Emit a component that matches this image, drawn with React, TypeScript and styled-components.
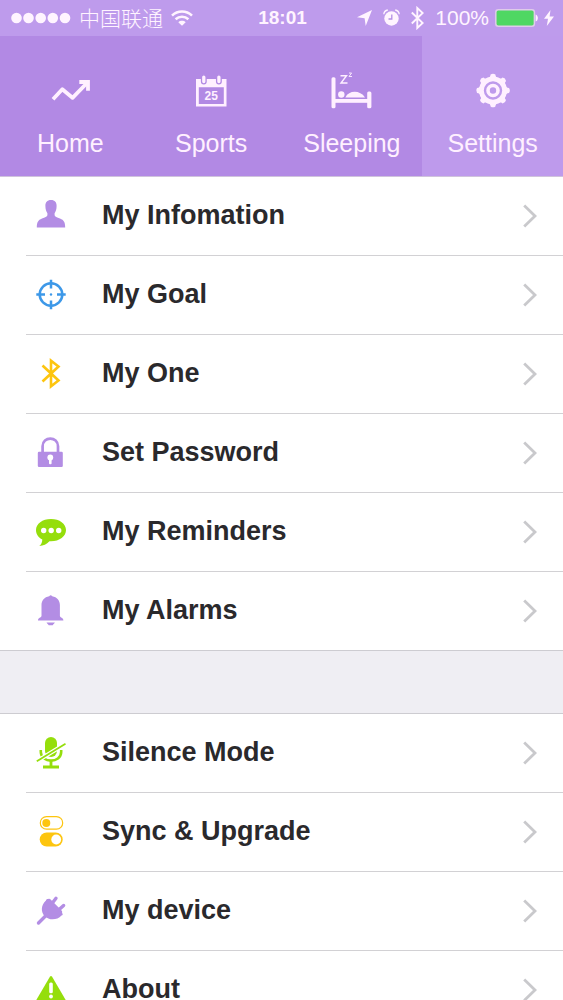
import React from "react";
import styled, { createGlobalStyle } from "styled-components";

const LILAC = "#b38de4";
const LIME = "#95de0c";
const AMBER = "#fdc50f";
const SKY = "#3d98e8";

const GlobalStyle = createGlobalStyle`
  * { box-sizing: border-box; }
  body {
    margin: 0;
    background: #ffffff;
    font-family: "Liberation Sans", Arial, "Noto Sans CJK SC", sans-serif;
  }
`;

const Screen = styled.div`
  display: flex;
  flex-direction: column;
  height: 100vh;
  overflow: hidden;
`;

const StatusBar = styled.header`
  display: grid;
  grid-template-columns: 1fr auto 1fr;
  align-items: center;
  flex: none;
  height: 36px;
  padding: 0 9px 0 11px;
  background: #be9bec;
  color: #fff4ff;
`;

const StatusGroup = styled.div<{ $end?: boolean; $gap: number }>`
  display: flex;
  align-items: center;
  justify-content: ${(p) => (p.$end ? "flex-end" : "flex-start")};
  gap: ${(p) => p.$gap}px;
  white-space: nowrap;
`;

const Carrier = styled.span`
  padding-bottom: 2px;
  font-family: "Noto Sans CJK SC", sans-serif;
  font-size: 21px;
  font-weight: 300;
  line-height: 30px;
`;

const Clock = styled.time`
  font-size: 19px;
  font-weight: 700;
  line-height: 30px;
`;

const Percent = styled.span`
  font-size: 21px;
  line-height: 30px;
`;

const TabBar = styled.nav`
  display: grid;
  grid-template-columns: repeat(4, 1fr);
  flex: none;
  height: 141px;
  border-bottom: 1px solid #cfc3dc;
  background: #b289e4;
`;

const Tab = styled.a<{ $active?: boolean }>`
  display: flex;
  flex-direction: column;
  align-items: center;
  gap: 17px;
  padding-top: 35px;
  background: ${(p) => (p.$active ? "#be9aec" : "transparent")};
  color: #fff0ff;
  font-size: 25px;
  line-height: 30px;
  text-decoration: none;
`;

const Content = styled.main`
  flex: 1;
  min-height: 0;
  overflow-y: auto;
  scrollbar-width: none;
  background: #efeef3;
`;

const Group = styled.ul`
  margin: 0;
  padding: 0 0 0 26px;
  list-style: none;
  background: #ffffff;

  & + & {
    margin-top: 62px;
    border-top: 1px solid #cdccd1;
  }

  &:first-child {
    border-bottom: 1px solid #cdccd1;
  }
`;

const Item = styled.li`
  & + & {
    border-top: 1px solid #d2d1d4;
  }
`;

const RowLink = styled.a`
  display: flex;
  align-items: center;
  height: 78px;
  padding: 0 26px 0 9px;
  color: #2a292c;
  text-decoration: none;
`;

const RowLabel = styled.span`
  flex: 1;
  margin-left: 35px;
  padding-bottom: 2px;
  font-size: 27px;
  font-weight: 700;
  line-height: 32px;
`;

const RowIcon = styled.svg.attrs({ viewBox: "0 0 32 32", "aria-hidden": true })`
  flex: none;
  width: 32px;
  height: 32px;
`;

const TabIcon = styled.svg.attrs({ viewBox: "0 0 40 40", "aria-hidden": true })`
  flex: none;
  width: 40px;
  height: 40px;
  overflow: visible;
`;

const Chevron = () => (
  <svg width="14" height="24" viewBox="0 0 14 24" aria-hidden="true">
    <path d="M1.200 1.500 12 12 1.200 22.500" fill="none" stroke="#c9c9cc" strokeWidth="2.800" />
  </svg>
);

const SignalDots = () => (
  <svg width="60" height="12" viewBox="0 0 60 12" fill="currentColor" aria-hidden="true">
    {[5.5, 17.5, 29.7, 41.8, 54].map((x) => (
      <circle key={x} cx={x} cy="6" r="5.300" />
    ))}
  </svg>
);

const Wifi = () => (
  <svg width="22" height="16" viewBox="0 0 22 16" fill="none" stroke="currentColor" strokeWidth="2.600" aria-hidden="true">
    <path d="M1 5.600C6.800.1 15.200.1 21 5.600" />
    <path d="M4.600 9.300C8.300 5.900 13.700 5.900 17.400 9.300" />
    <path d="M11 15.800 7.300 12.200C9.400 10.300 12.600 10.300 14.700 12.200Z" fill="currentColor" stroke="none" />
  </svg>
);

const LocationArrow = () => (
  <svg width="15" height="16" viewBox="0 0 15 16" fill="currentColor" aria-hidden="true">
    <path d="M15 0 8.700 16 7.600 8.200 0 7.200Z" />
  </svg>
);

const AlarmClock = () => (
  <svg width="17" height="18" viewBox="0 0 17 18" aria-hidden="true">
    <circle cx="8.500" cy="9.500" r="7.200" fill="currentColor" />
    <path d="M.8 5.200C1 3 2.600 1.400 4.800 1M16.200 5.200C16 3 14.400 1.400 12.200 1" fill="none" stroke="currentColor" strokeWidth="1.300" />
    <path d="M8.800 5.500V10H5.500" fill="none" stroke="#b48fe4" strokeWidth="1.300" />
  </svg>
);

const StatusBluetooth = () => (
  <svg width="13" height="24" viewBox="0 0 13 24" fill="none" stroke="currentColor" strokeWidth="1.900" aria-hidden="true">
    <path d="M.8 6.500 11.700 17 6.300 22V2L11.700 7 .8 17.500" />
  </svg>
);

const Battery = () => (
  <svg width="43" height="18" viewBox="0 0 43 18" aria-hidden="true">
    <rect x=".8" y=".8" width="38.600" height="16.400" rx="2.500" fill="#4fd763" stroke="#dfcbea" strokeWidth="1.500" />
    <path d="M40.600 5.500C43.600 6.500 43.600 11.500 40.600 12.500Z" fill="currentColor" />
  </svg>
);

const Bolt = () => (
  <svg width="10" height="16" viewBox="0 0 10 16" fill="currentColor" aria-hidden="true">
    <path d="M6.500 0 0 8.800H4L2.800 16 10 6.400H5.600Z" />
  </svg>
);

const TrendIcon = () => (
  <TabIcon fill="none" stroke="currentColor" strokeWidth="3.800">
    <path d="M3 28.300 12.300 18.300 22.500 26.800 37 12" strokeLinejoin="round" />
    <path d="M29.300 11H38V19.800" />
  </TabIcon>
);

const CalendarIcon = () => (
  <TabIcon>
    <path fillRule="evenodd" fill="currentColor" d="M5 8H35.500V35.500H5ZM7.800 16.300V33H32.800V16.300Z" />
    <rect x="10.500" y="3.800" width="4.600" height="9" rx="2.300" fill="currentColor" stroke="#b289e4" strokeWidth="1.300" />
    <rect x="25.600" y="3.800" width="4.600" height="9" rx="2.300" fill="currentColor" stroke="#b289e4" strokeWidth="1.300" />
    <text x="20.300" y="29" fill="currentColor" fontSize="12" fontWeight="700" textAnchor="middle">25</text>
  </TabIcon>
);

const BedIcon = () => (
  <TabIcon fill="currentColor">
    <rect x="-.5" y="6.300" width="4" height="31" rx="1.500" />
    <rect x="35.200" y="20.500" width="4.200" height="16.800" rx="1.500" />
    <rect x="2" y="28" width="35" height="3.800" />
    <circle cx="9.300" cy="23.500" r="3.200" />
    <path d="M13.300 26.400C17 19 28 19 33 26.400Z" />
    <path d="M8.500 4.700H14.500L9 12H15.500" fill="none" stroke="currentColor" strokeWidth="1.400" />
    <path d="M17 2H19.600L17 5.500H20" fill="none" stroke="currentColor" strokeWidth=".9" />
  </TabIcon>
);

const GearIcon = () => (
  <TabIcon fill="none" stroke="currentColor">
    <circle cx="20" cy="19.500" r="11.600" strokeWidth="4.800" />
    {[0, 45, 90, 135, 180, 225, 270, 315].map((angle) => (
      <path
        key={angle}
        d="M14.800 7.300C17 6.600 17.300 5.500 17.600 3.500Q20 1.800 22.400 3.500C22.700 5.500 23 6.600 25.200 7.300Z"
        fill="currentColor"
        stroke="none"
        transform={`rotate(${angle} 20 19.500)`}
      />
    ))}
    <circle cx="20" cy="19.500" r="5" strokeWidth="3.600" />
  </TabIcon>
);

const PersonIcon = () => (
  <RowIcon fill={LILAC}>
    <path d="M16 0C19.900 0 21.800 2.500 21.600 6.200C21.500 9.300 20.800 11.400 19.600 13.200V15.200C19.900 16.800 22 17.200 25 18.400C29 20 30.200 22.300 30.200 27.500H1.800C1.800 22.300 3 20 7 18.400C10 17.200 12.100 16.800 12.400 15.200V13.200C11.200 11.400 10.500 9.300 10.400 6.200C10.200 2.500 12.100 0 16 0Z" />
  </RowIcon>
);

const TargetIcon = () => (
  <RowIcon fill="none" stroke={SKY} strokeWidth="2.500">
    <circle cx="16" cy="15.500" r="11.300" />
    <path d="M16 .8V9.500M16 21.500V30.200M1.300 15.500H10M22 15.500H30.700" />
    <circle cx="16" cy="15.500" r="1.200" fill={SKY} stroke="none" />
  </RowIcon>
);

const BluetoothIcon = () => (
  <RowIcon fill="none" stroke={AMBER} strokeWidth="2.600">
    <path d="M7.500 7.500 23.500 22.500 16 28.300V2.700L23.500 8.500 7.500 23.500" />
  </RowIcon>
);

const LockIcon = () => (
  <RowIcon>
    <path d="M7.600 16V9.300C7.600-.9 23-.9 23 9.300V16" fill="none" stroke={LILAC} strokeWidth="2.700" />
    <rect x="2.800" y="14.800" width="25" height="15.200" rx="1.200" fill={LILAC} />
    <circle cx="15.300" cy="20.500" r="2.900" fill="#ffffff" />
    <rect x="14" y="21.500" width="2.600" height="5.800" rx="1" fill="#ffffff" />
  </RowIcon>
);

const BubbleIcon = () => (
  <RowIcon>
    <path d="M16 3C24.600 3 31 7.800 31 14S24.600 25.300 16 25.300H14.500C11.500 28.500 8.500 29.700 4.300 30C6.300 28.300 7.200 26.500 7.300 23.500C3.300 21.400 1 18 1 14C1 7.800 7.400 3 16 3Z" fill={LIME} />
    <g fill="#ffffff">
      <circle cx="8.700" cy="14.500" r="2.700" />
      <circle cx="16.200" cy="14.500" r="2.700" />
      <circle cx="23.700" cy="14.500" r="2.700" />
    </g>
  </RowIcon>
);

const BellIcon = () => (
  <RowIcon fill={LILAC}>
    <path d="M14.200 1.200Q15.700-.5 17.200 1.200C22 2 24.900 5.500 24.900 10V21C25.100 22.700 28.400 22.500 28.400 25.600H3C3 22.500 6.300 22.700 6.500 21V10C6.500 5.500 9.400 2 14.200 1.200Z" />
    <path d="M11.500 27.500H19.900C19.300 29 18.200 28.800 17.700 30.300H13.700C13.200 28.800 12.100 29 11.500 27.500Z" />
  </RowIcon>
);

const MutedMicIcon = () => (
  <RowIcon>
    <rect x="10" y="0" width="12" height="20" rx="6" fill={LIME} />
    <path d="M5.800 13V15C6 26.500 26 26.500 26.200 15V13" fill="none" stroke={LIME} strokeWidth="2.600" />
    <path d="M16 23V29M8 30H24" fill="none" stroke={LIME} strokeWidth="2.800" />
    <path d="M1.800 24.300 30.500 6.800" stroke="#ffffff" strokeWidth="4.200" />
    <path d="M1.800 24.300 30.500 6.800" stroke={LIME} strokeWidth="1.800" />
  </RowIcon>
);

const TogglesIcon = () => (
  <RowIcon>
    <rect x="5.300" y=".6" width="22.400" height="12.600" rx="6.300" fill="#ffffff" stroke={AMBER} strokeWidth="1.200" />
    <circle cx="11.300" cy="6.900" r="4" fill={AMBER} />
    <rect x="4.700" y="16.500" width="23" height="14" rx="7" fill={AMBER} />
    <circle cx="21.200" cy="23.500" r="4.900" fill="#ffffff" />
  </RowIcon>
);

const PlugIcon = () => (
  <RowIcon fill="none" stroke={LILAC} strokeLinecap="round">
    <path d="M3.500 28 11 20.500" strokeWidth="3.400" />
    <path d="M17 8.500 21 3.300M23 15.500 28.600 10.500" strokeWidth="3.400" />
    <path d="M13 4 27.500 18.500C28 19.500 27.500 20.500 26.500 20.500C22 25.500 14 25.500 9.800 21.200C5.500 17 6 10 11 5.500C11.200 4.300 12 3.700 13 4Z" fill={LILAC} stroke="none" />
    <path d="M14 7 24 17" strokeWidth="6" />
  </RowIcon>
);

const WarningIcon = () => (
  <RowIcon>
    <path d="M14.900 2.700Q16 1.500 17.100 2.700L31 26.500Q31.500 28 30 28H2Q.5 28 1 26.500Z" fill={LIME} />
    <rect x="14.200" y="8.500" width="3.600" height="10.700" rx="1.500" fill="#ffffff" />
    <circle cx="16" cy="22.500" r="1.900" fill="#ffffff" />
  </RowIcon>
);

type Entry = { label: string; icon: React.FC };

const TABS: Entry[] = [
  { label: "Home", icon: TrendIcon },
  { label: "Sports", icon: CalendarIcon },
  { label: "Sleeping", icon: BedIcon },
  { label: "Settings", icon: GearIcon },
];

const GROUPS: Entry[][] = [
  [
    { label: "My Infomation", icon: PersonIcon },
    { label: "My Goal", icon: TargetIcon },
    { label: "My One", icon: BluetoothIcon },
    { label: "Set Password", icon: LockIcon },
    { label: "My Reminders", icon: BubbleIcon },
    { label: "My Alarms", icon: BellIcon },
  ],
  [
    { label: "Silence Mode", icon: MutedMicIcon },
    { label: "Sync & Upgrade", icon: TogglesIcon },
    { label: "My device", icon: PlugIcon },
    { label: "About", icon: WarningIcon },
  ],
];

export default function App() {
  return (
    <Screen>
      <GlobalStyle />
      <StatusBar>
        <StatusGroup $gap={8}>
          <SignalDots />
          <Carrier lang="zh-CN">中国联通</Carrier>
          <Wifi />
        </StatusGroup>
        <Clock>18:01</Clock>
        <StatusGroup $end $gap={6}>
          <StatusGroup $gap={11}>
            <LocationArrow />
            <AlarmClock />
            <StatusBluetooth />
            <Percent>100%</Percent>
          </StatusGroup>
          <Battery />
          <Bolt />
        </StatusGroup>
      </StatusBar>
      <TabBar>
        {TABS.map(({ label, icon: Icon }) => (
          <Tab key={label} href="#" $active={label === "Settings"} aria-current={label === "Settings" ? "page" : undefined}>
            <Icon />
            {label}
          </Tab>
        ))}
      </TabBar>
      <Content>
        {GROUPS.map((entries) => (
          <Group key={entries[0].label}>
            {entries.map(({ label, icon: Icon }) => (
              <Item key={label}>
                <RowLink href="#">
                  <Icon />
                  <RowLabel>{label}</RowLabel>
                  <Chevron />
                </RowLink>
              </Item>
            ))}
          </Group>
        ))}
      </Content>
    </Screen>
  );
}
